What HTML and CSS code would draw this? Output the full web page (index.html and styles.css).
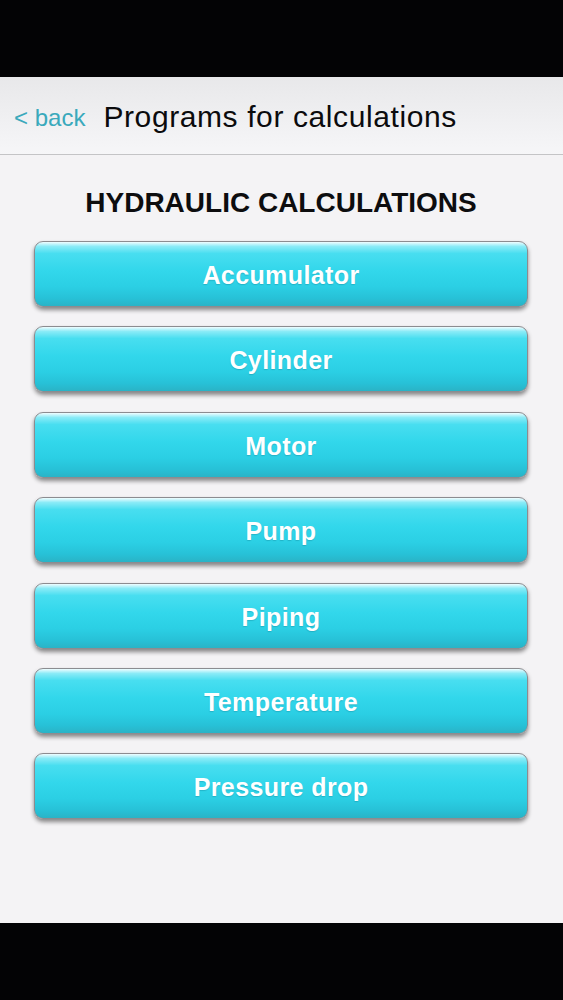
FILE: index.html
```html
<!DOCTYPE html>
<html lang="en">
<head>
  <meta charset="UTF-8" />
  <meta name="viewport" content="width=device-width, initial-scale=1.0"/>
  <link rel="stylesheet" href="styles.css">
</head>
<body>

  <div class="black-bar"></div>

  <div class="app">
    <div class="nav-bar">
      <a href="#" class="back-link">&lt; back</a>
      <h1 class="nav-title">Programs for calculations</h1>
    </div>

    <div class="content">
      <h2 class="section-title">HYDRAULIC CALCULATIONS</h2>
      <div class="menu">
        <a href="#" class="menu-btn">Accumulator</a>
        <a href="#" class="menu-btn">Cylinder</a>
        <a href="#" class="menu-btn">Motor</a>
        <a href="#" class="menu-btn">Pump</a>
        <a href="#" class="menu-btn">Piping</a>
        <a href="#" class="menu-btn">Temperature</a>
        <a href="#" class="menu-btn">Pressure drop</a>
      </div>
    </div>
  </div>

  <div class="black-bar"></div>

</body>
</html>
```

FILE: styles.css
```css
body {
  margin: 0;
  padding: 0;
  background-color: #030305;
  font-family: 'Liberation Sans', Arial, sans-serif;
  height: 1000px;
  overflow: hidden;
  display: flex;
  flex-direction: column;
}

.black-bar {
  height: 77px;
  background-color: #030305;
  flex-shrink: 0;
}

.app {
  flex: 1;
  display: flex;
  flex-direction: column;
  background-color: #f4f3f5;
}

/* TOP NAVIGATION */
.nav-bar {
  height: 77px;
  display: flex;
  align-items: center;
  gap: 18px;
  padding: 0 0 0 14px;
  background: linear-gradient(to bottom, #e8e8ea, #f6f6f8);
  border-bottom: 1px solid #c4c4c6;
}

.back-link {
  color: #3aa9bc;
  text-decoration: none;
  font-size: 24px;
  margin-top: 5px;
}

.nav-title {
  margin: 2px 0 0 0;
  font-size: 30px;
  letter-spacing: 0.6px;
  font-weight: normal;
  color: #0b0b0d;
}

/* MENU */
.content {
  padding: 32px 35px 0 34px;
}

.section-title {
  margin: 0 0 22px 0;
  text-align: center;
  font-size: 28px;
  line-height: 32px;
  font-weight: bold;
  color: #0d0d0f;
}

.menu {
  display: flex;
  flex-direction: column;
  gap: 19.4px;
}

.menu-btn {
  display: flex;
  align-items: center;
  justify-content: center;
  height: 61px;
  padding-top: 3px;
  border: 1px solid #8c8c90;
  border-radius: 9px;
  background: linear-gradient(to bottom, #f0fdff 0%, #8aebf7 7%, #48def0 18%, #32d7eb 45%, #2bcfe4 70%, #27c1d7 88%, #2ab3c6 100%);
  box-shadow: 0 3px 4px rgba(0,0,0,0.45);
  color: white;
  font-size: 25px;
  letter-spacing: 0.4px;
  font-weight: bold;
  text-decoration: none;
  text-shadow: 0 1px 1px rgba(0,90,110,0.25);
}
```
